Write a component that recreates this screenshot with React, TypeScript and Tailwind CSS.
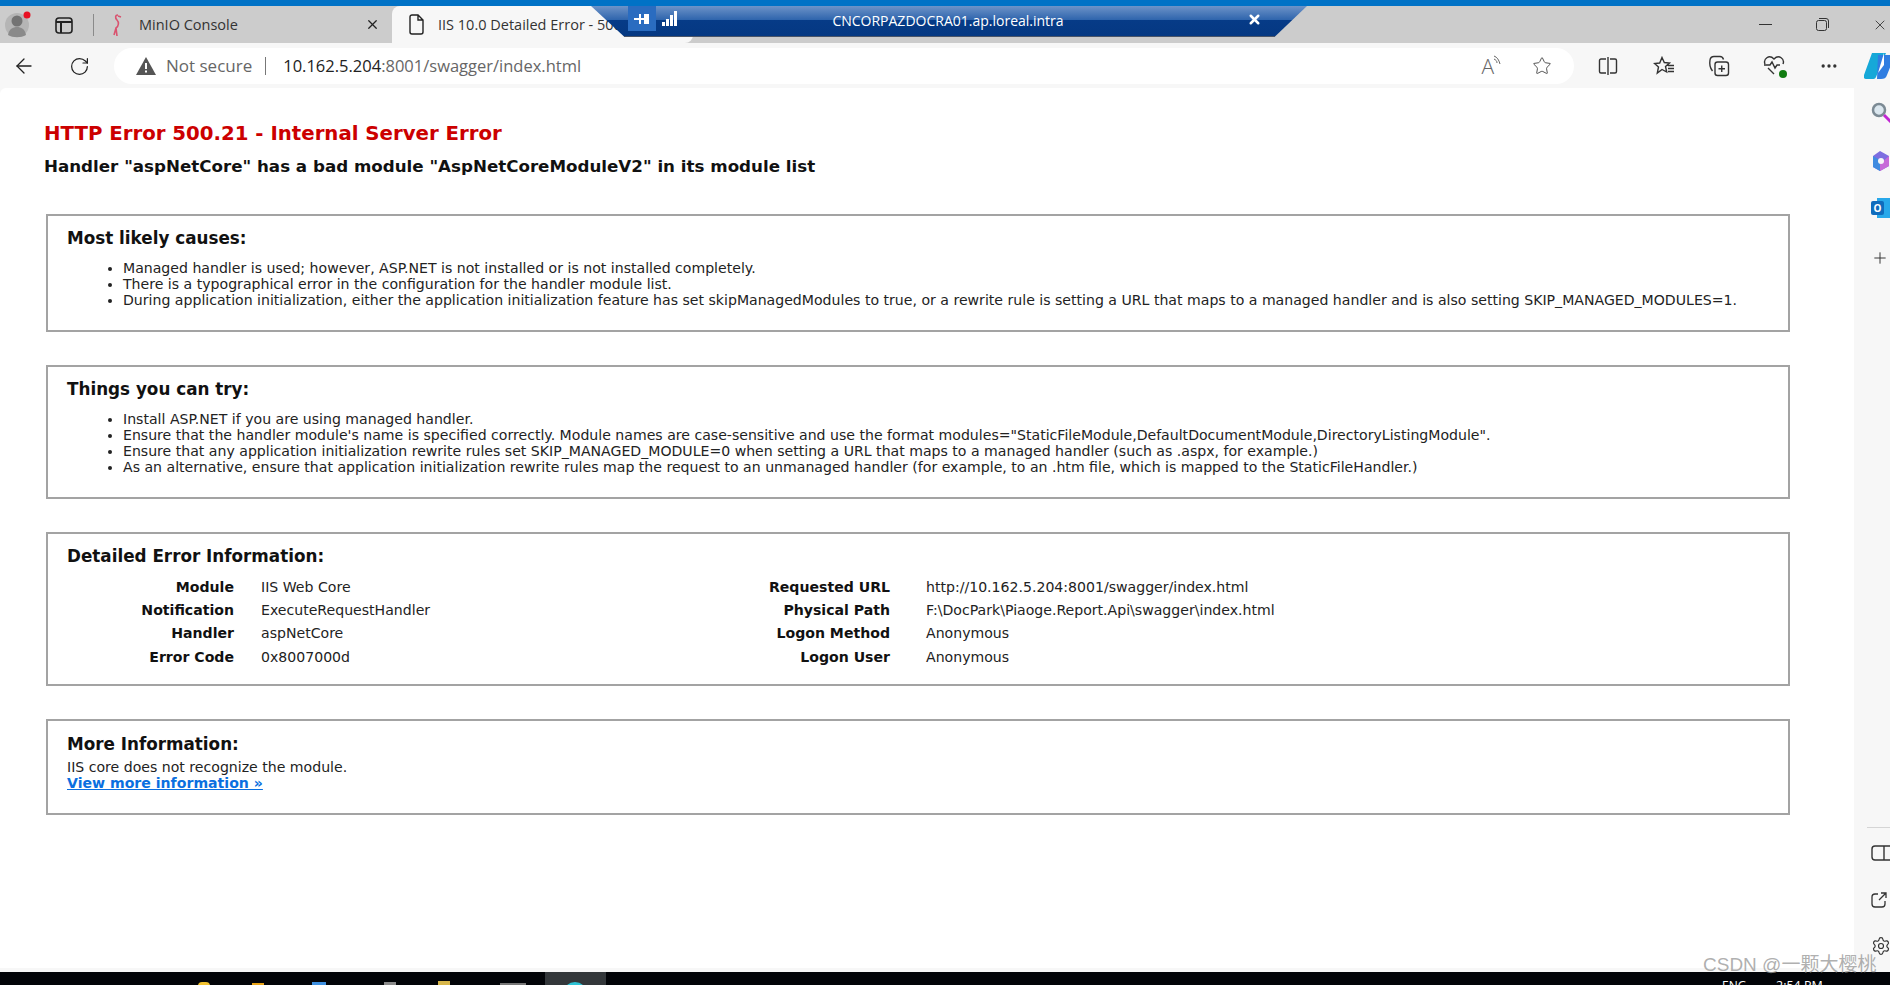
import { ArrowLeft, MoreHorizontal, Plus, RotateCw, Settings, Star, X } from "lucide-react";

const uiFont = "font-['Open_Sans','Noto_Sans',sans-serif]";

const causes = [
  "Managed handler is used; however, ASP.NET is not installed or is not installed completely.",
  "There is a typographical error in the configuration for the handler module list.",
  "During application initialization, either the application initialization feature has set skipManagedModules to true, or a rewrite rule is setting a URL that maps to a managed handler and is also setting SKIP_MANAGED_MODULES=1.",
];

const tries = [
  "Install ASP.NET if you are using managed handler.",
  'Ensure that the handler module\'s name is specified correctly. Module names are case-sensitive and use the format modules="StaticFileModule,DefaultDocumentModule,DirectoryListingModule".',
  "Ensure that any application initialization rewrite rules set SKIP_MANAGED_MODULE=0 when setting a URL that maps to a managed handler (such as .aspx, for example.)",
  "As an alternative, ensure that application initialization rewrite rules map the request to an unmanaged handler (for example, to an .htm file, which is mapped to the StaticFileHandler.)",
];

const details = [
  ["Module", "IIS Web Core", "Requested URL", "http://10.162.5.204:8001/swagger/index.html"],
  ["Notification", "ExecuteRequestHandler", "Physical Path", "F:\\DocPark\\Piaoge.Report.Api\\swagger\\index.html"],
  ["Handler", "aspNetCore", "Logon Method", "Anonymous"],
  ["Error Code", "0x8007000d", "Logon User", "Anonymous"],
];

const Box = ({ title, className, children }: { title: string; className: string; children: React.ReactNode }) => (
  <section className={`border-2 border-[#a3a3a3] pl-[19px] ${className}`}>
    <h3 className="text-[16.8px] leading-[20px] font-bold text-[#111]">{title}</h3>
    {children}
  </section>
);

const BulletList = ({ items }: { items: string[] }) => (
  <ul className="mt-[12px] pl-[56px] list-disc text-[14.1px] leading-[16px] text-[#222]">
    {items.map((item) => (
      <li key={item}>{item}</li>
    ))}
  </ul>
);

const TopBar = () => (
  <div className={`relative h-[37px] bg-[#cccccc] flex items-center ${uiFont}`}>
    <svg width="26" height="28" viewBox="0 0 26 28" className="ml-[5px]">
      <circle cx="12" cy="14" r="12" fill="#b5b5b5" />
      <circle cx="12" cy="10" r="5.5" fill="#737373" />
      <path d="M3 24c1-6 5-8 9-8s8 2 9 8c-5 3-13 3-18 0z" fill="#8a8a8a" />
      <circle cx="22" cy="4" r="3.5" fill="#e81123" />
    </svg>
    <svg width="20" height="20" viewBox="0 0 20 20" fill="none" stroke="#222" strokeWidth="1.6" className="ml-[23px]">
      <rect x="2" y="3" width="16" height="15" rx="3" />
      <path d="M2 7h16M7 7v11" strokeWidth="2" />
    </svg>
    <div className="ml-[19px] h-[22px] w-px bg-[#8a8a8a]" />
    <svg width="16" height="24" viewBox="0 0 16 24" fill="none" stroke="#d9536f" strokeWidth="1.6" className="ml-[15px]">
      <path d="M9 2c-3 0-3 3-1 5 2 2 2 6-1 8l1 8M7 15l-2 7M9 3l3 1" />
    </svg>
    <span className="ml-[14px] w-[226px] text-[14.5px] text-[#333]">MinIO Console</span>
    <X size={15} strokeWidth={2} className="text-[#222]" />
    <div className="ml-[12px] h-full w-[301px] rounded-t-[8px] rounded-br-[8px] bg-[#f7f7f7] flex items-center pl-[16px] overflow-hidden">
      <svg width="17" height="21" viewBox="0 0 17 21" fill="none" stroke="#222" strokeWidth="1.4" className="shrink-0">
        <path d="M2 3a2 2 0 0 1 2-2h6l5 5v12a2 2 0 0 1-2 2H4a2 2 0 0 1-2-2zM10 1v5h5" />
      </svg>
      <span className="ml-[13px] text-[14.5px] text-[#333] whitespace-nowrap">IIS 10.0 Detailed Error - 500.21</span>
    </div>
    <div className="ml-auto flex items-center text-[#333]">
      <div className="h-px w-[13px] bg-[#333]" />
      <svg width="13" height="13" viewBox="0 0 13 13" fill="none" stroke="#333" className="ml-[44px]">
        <rect x="0.5" y="2.5" width="10" height="10" rx="2" />
        <path d="M3 .5h7a2.5 2.5 0 0 1 2.5 2.5v7" />
      </svg>
      <X size={16} strokeWidth={1.3} className="ml-[43px] mr-[2px]" />
    </div>
  </div>
);

const ConnectionBar = () => (
  <div className={`absolute left-[591px] top-[6px] w-[716px] h-[31px] flex ${uiFont}`}>
    <svg width="716" height="31" viewBox="0 0 716 31" className="absolute inset-0">
      <defs>
        <linearGradient id="rdp" x1="0" x2="0" y1="0" y2="1">
          <stop offset="0" stopColor="#6d93c8" />
          <stop offset="0.45" stopColor="#2f65ad" />
          <stop offset="0.46" stopColor="#063b87" />
          <stop offset="1" stopColor="#053882" />
        </linearGradient>
      </defs>
      <path d="M0 0H716L684 30.500H33z" fill="url(#rdp)" />
      <path d="M33 30.500H684" stroke="#4a5568" />
    </svg>
    <div className="relative ml-[37px] h-[25px] w-[28px] bg-[#2a6cc0] flex items-center justify-center">
      <svg width="16" height="12" viewBox="0 0 16 12" fill="white">
        <path d="M0 5h5V1h2v4h3V1h5v10h-5V7H7v4H5V7H0z" />
      </svg>
    </div>
    <svg width="16" height="15" viewBox="0 0 16 15" fill="white" className="relative ml-[6px] mt-[5px]">
      <path d="M0 11h3v4H0zM4 8h3v7H4zM8 4h3v11H8zM12 0h3v15h-3z" />
    </svg>
    <span className="absolute left-0 right-[2px] top-[5px] text-center text-[14px] leading-[19px] text-white">
      CNCORPAZDOCRA01.ap.loreal.intra
    </span>
    <X size={15} strokeWidth={4} className="absolute left-[656px] top-[6px] text-white" />
  </div>
);

const Toolbar = () => (
  <div className={`h-[44px] mt-px bg-[#f7f7f7] flex items-center ${uiFont}`}>
    <ArrowLeft size={24} strokeWidth={1.3} className="ml-[12px] shrink-0 text-[#222]" />
    <RotateCw size={21} strokeWidth={1.4} className="ml-[33px] shrink-0 text-[#222]" />
    <div className="ml-[24px] h-[36px] w-[1460px] shrink-0 rounded-full bg-white flex items-center">
      <svg width="20" height="18" viewBox="0 0 20 18" className="ml-[22px]">
        <path d="M10 0l10 18H0z" fill="#555" />
        <path d="M9 6h2v6H9zM9 13.500h2v2H9z" fill="#fff" />
      </svg>
      <span className="ml-[10px] text-[17px] text-[#666]">Not secure</span>
      <div className="ml-[13px] h-[18px] w-px bg-[#777]" />
      <span className="ml-[17px] text-[16.5px] text-[#222]">
        10.162.5.204<span className="text-[#666]">:8001/swagger/index.html</span>
      </span>
      <span className="ml-auto mr-[22px] flex items-center">
        <span className="relative text-[21px] font-light leading-none text-[#666]">
          A
          <svg width="9" height="12" viewBox="0 0 9 12" fill="none" stroke="#666" className="absolute -right-[8px] -top-[1px]">
            <path d="M1 1c3 1 5 4 6 8M1 4c2 1 3 2 3 4" />
          </svg>
        </span>
        <Star size={20} strokeWidth={1.2} className="ml-[38px] text-[#555]" />
      </span>
    </div>
    <svg width="20" height="20" viewBox="0 0 20 20" fill="none" stroke="#333" strokeWidth="1.4" className="ml-[24px] shrink-0">
      <path d="M8 3H3a1.500 1.500 0 0 0-1.500 1.500v11A1.500 1.500 0 0 0 3 17h5M12 3h5a1.500 1.500 0 0 1 1.500 1.500v11A1.500 1.500 0 0 1 17 17h-5M10 1v18" />
    </svg>
    <svg width="22" height="20" viewBox="0 0 22 20" fill="none" stroke="#333" strokeWidth="1.4" className="ml-[35px] shrink-0">
      <path d="M9 1.500l2.300 5 5.200.5-4 3.500 1.200 5.500L9 13.500 4.300 17l1.200-6L1.500 7.500l5.200-.5zM15 9.500h6M15 12.500h6M15 15.500h6" />
    </svg>
    <svg width="22" height="22" viewBox="0 0 22 22" fill="none" stroke="#333" strokeWidth="1.4" className="ml-[33px] shrink-0">
      <rect x="7" y="7" width="13.500" height="13.500" rx="2.500" />
      <path d="M13.750 10.500v6.500M10.500 13.750H17M4.500 16C2 13 1.500 8 2 5c.3-2 2-3.500 4-3.500h6c1.500 0 3 1 3.500 3" />
    </svg>
    <span className="relative ml-[33px] h-[22px] w-[22px] shrink-0">
      <svg width="22" height="20" viewBox="0 0 22 20" fill="none" stroke="#333" strokeWidth="1.4">
        <path d="M2 9C0 4 6-1 11 4c5-5 11 0 9 5M1 10h6l2-3 3 6 2-3h3M5 13l6 6" />
      </svg>
      <span className="absolute right-[-2px] bottom-[-1px] h-[8px] w-[8px] rounded-full bg-[#107c10]" />
    </span>
    <MoreHorizontal size={20} strokeWidth={2} className="ml-[34px] shrink-0 text-[#333]" />
    <svg width="30" height="26" viewBox="0 0 30 26" className="ml-[25px] shrink-0">
      <path d="M8 0h14L12 24c-1 2-2 2-4 2H2C0 26-1 24 0 22z" fill="#16a8d8" />
      <path d="M14 2h12c3 0 4 2 3 5l-6 15c-1 3-3 4-6 4h-4z" fill="#2f7de1" />
      <path d="M20 0l-6 20 6-8z" fill="#fff" />
    </svg>
  </div>
);

const ErrorPage = () => (
  <main className="relative flex-1 bg-white rounded-tl-[6px] pl-[44px] pr-[64px] pt-[35px] font-['DejaVu_Sans','Liberation_Sans',sans-serif]">
    <h1 className="text-[19.74px] leading-[22px] font-bold text-[#cc0000]">HTTP Error 500.21 - Internal Server Error</h1>
    <h2 className="mt-[10px] text-[16.7px] leading-[22px] font-bold text-[#111]">
      Handler "aspNetCore" has a bad module "AspNetCoreModuleV2" in its module list
    </h2>
    <div className="ml-[2px] mt-[37px] flex flex-col gap-[33px]">
      <Box title="Most likely causes:" className="h-[118px] pt-[12px]">
        <BulletList items={causes} />
      </Box>
      <Box title="Things you can try:" className="h-[134px] pt-[12px]">
        <BulletList items={tries} />
      </Box>
      <Box title="Detailed Error Information:" className="h-[154px] pt-[12px]">
        <div className="mt-[10px] grid grid-cols-[167px_399px_257px_1fr] text-[14.1px] leading-[23.2px] text-[#222]">
          {details.map((row) => (
            <div key={row[0]} className="contents">
              <span className="text-right font-bold text-[#111]">{row[0]}</span>
              <span className="pl-[27px]">{row[1]}</span>
              <span className="text-right font-bold text-[#111]">{row[2]}</span>
              <span className="pl-[36px]">{row[3]}</span>
            </div>
          ))}
        </div>
      </Box>
      <Box title="More Information:" className="h-[96px] pt-[13px]">
        <p className="mt-[5px] text-[14.1px] leading-[16px] text-[#222]">
          IIS core does not recognize the module.
          <br />
          <a href="#" className="font-bold text-[#0a6fe0] underline">View more information »</a>
        </p>
      </Box>
    </div>
  </main>
);

const SideBar = () => (
  <aside className="w-[36px] flex flex-col pl-[17px] overflow-hidden">
    <svg width="22" height="22" viewBox="0 0 22 22" fill="none" className="mt-[14px] shrink-0">
      <circle cx="8" cy="8" r="6" stroke="#7c8a94" strokeWidth="2.500" fill="#dbe7ef" />
      <path d="M13 13l7 7" stroke="#c026d3" strokeWidth="3" />
    </svg>
    <svg width="22" height="22" viewBox="0 0 22 22" className="mt-[26px] shrink-0">
      <path d="M9 1l9 5v10l-9 5-7-4V6z" fill="#7d6ee0" />
      <path d="M2 6l7 4v11l-7-4z" fill="#3f8be0" />
      <path d="M18 6v10l-9 5V14z" fill="#c76bd8" />
      <circle cx="10" cy="11" r="3" fill="#f7f7f7" />
    </svg>
    <div className="relative mt-[26px] h-[20px] w-[22px] shrink-0">
      <div className="absolute left-[6px] top-0 h-[20px] w-[16px] bg-[#28a8ea]" />
      <div className="absolute left-0 top-[3px] h-[14px] w-[13px] rounded-[2px] bg-[#0f6cbd] flex items-center justify-center text-[10px] leading-none font-bold text-white font-['Open_Sans',sans-serif]">
        O
      </div>
    </div>
    <Plus size={18} strokeWidth={1.3} className="mt-[31px] shrink-0 text-[#333]" />
    <div className="mt-auto -ml-[4px] h-px w-[30px] shrink-0 bg-[#d5d5d5]" />
    <svg width="22" height="16" viewBox="0 0 22 16" fill="none" stroke="#333" strokeWidth="1.4" className="mt-[17px] shrink-0">
      <rect x="1" y="1" width="24" height="14" rx="3" />
      <path d="M13 1v14" />
    </svg>
    <svg width="16" height="16" viewBox="0 0 16 16" fill="none" stroke="#333" strokeWidth="1.3" className="mt-[31px] shrink-0">
      <path d="M7 2H4a3 3 0 0 0-3 3v7a3 3 0 0 0 3 3h7a3 3 0 0 0 3-3V9M8 8l7-7M10 1h5v5" />
    </svg>
    <Settings size={20} strokeWidth={1.4} className="mt-[28px] mb-[12px] shrink-0 text-[#333]" />
  </aside>
);

const TaskBar = () => (
  <footer className="relative h-[13px] mt-[4px] bg-[#020408] overflow-hidden flex">
    <div className="absolute left-[198px] top-[10px] h-[8px] w-[12px] rounded-full bg-[#f2c230]" />
    <div className="absolute left-[252px] top-[11px] h-[8px] w-[12px] bg-[#e8a317]" />
    <div className="absolute left-[312px] top-[10px] h-[8px] w-[14px] bg-[#3d8fe0]" />
    <div className="absolute left-[384px] top-[10px] h-[8px] w-[12px] bg-[#8a8a8a]" />
    <div className="absolute left-[438px] top-[9px] h-[8px] w-[12px] bg-[#d7b64a]" />
    <div className="absolute left-[500px] top-[11px] h-[8px] w-[26px] bg-[#777]" />
    <div className="absolute left-[545px] top-0 h-full w-[61px] bg-[#33373a]" />
    <div className="absolute left-[563px] top-[10px] h-[24px] w-[24px] rounded-full bg-[#2ec4d6]" />
    <span className={`absolute left-[1722px] top-[6px] text-[12px] leading-[16px] text-white ${uiFont}`}>ENG</span>
    <span className={`absolute left-[1776px] top-[6px] text-[12.500px] leading-[16px] text-white ${uiFont}`}>2:54 PM</span>
  </footer>
);

export default function App() {
  return (
    <div className="relative h-[985px] w-[1890px] overflow-hidden bg-[#f7f7f7] flex flex-col">
      <div className="h-[6px] bg-[#0072c6]" />
      <TopBar />
      <Toolbar />
      <div className="flex-1 min-h-0 flex">
        <ErrorPage />
        <SideBar />
      </div>
      <TaskBar />
      <ConnectionBar />
      <span className="absolute left-[1703px] top-[953px] text-[19px] leading-[24px] text-[#9a9a9a]/80 font-['Liberation_Sans','Noto_Sans_CJK_SC',sans-serif]">
        CSDN @一颗大樱桃
      </span>
    </div>
  );
}
